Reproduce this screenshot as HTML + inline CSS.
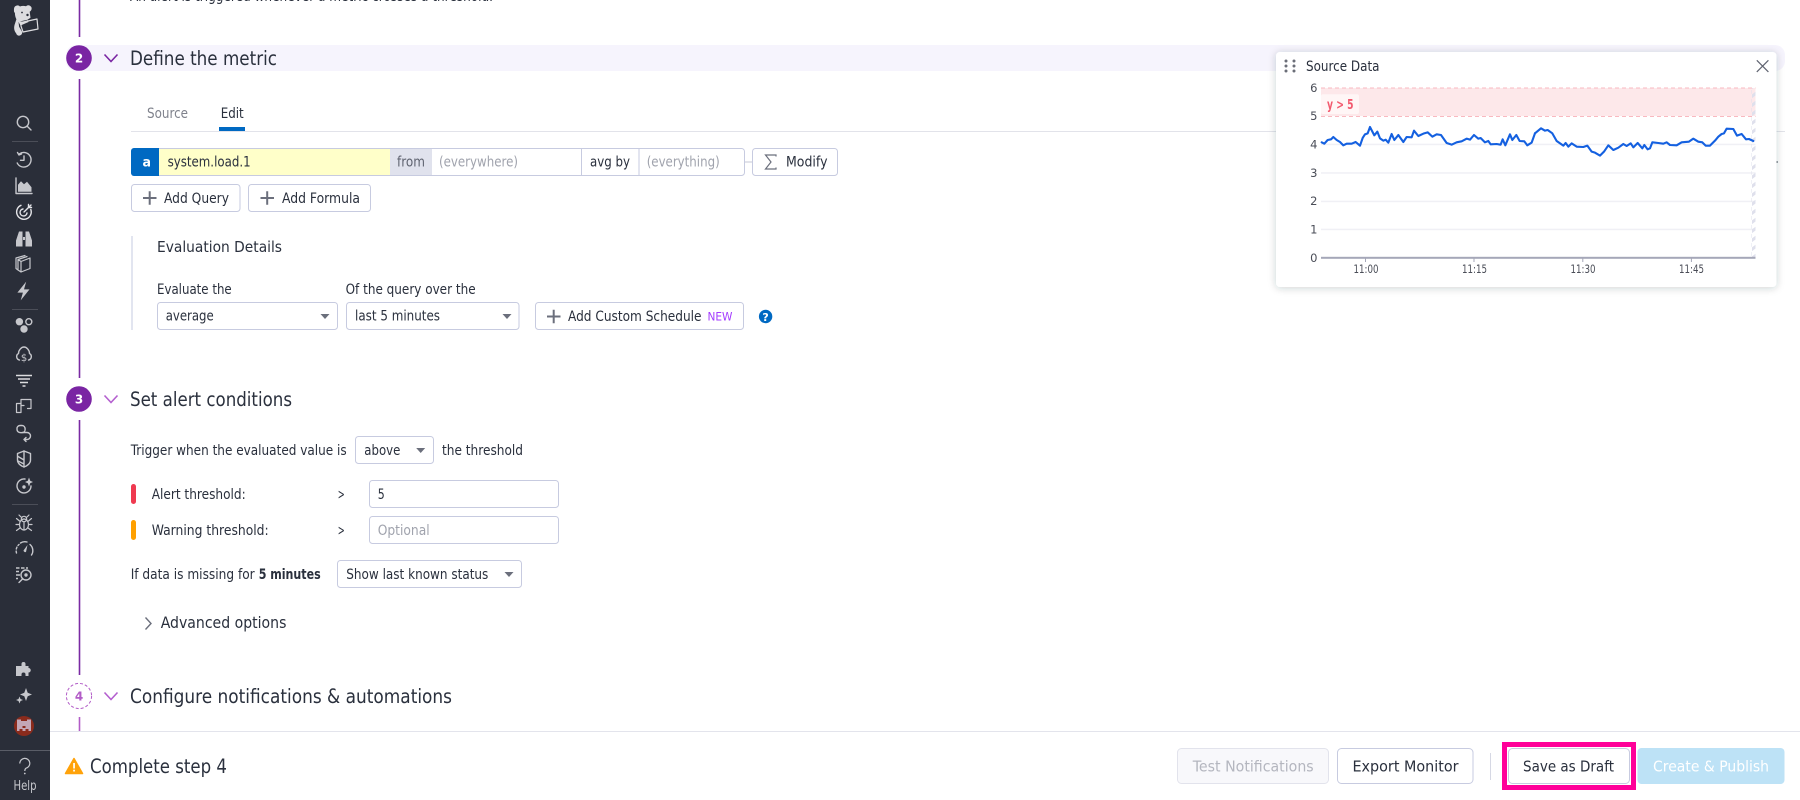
<!DOCTYPE html>
<html><head><meta charset="utf-8"><title>Define the metric</title>
<style>
html,body{margin:0;padding:0;background:#fff;width:1800px;height:800px;overflow:hidden}
svg{display:block}
text{font-family:"DejaVu Sans","Liberation Sans",sans-serif;fill:#2a303d;font-size:14px}
.t{font-size:19.5px}.m{font-size:15px}.g{fill:#a0a3ad}.s{font-size:11.5px;fill:#4a4d57}
.ic{fill:none;stroke:#c6c7cc;stroke-width:1.4;stroke-linecap:round;stroke-linejoin:round}
.if{fill:#c6c7cc;stroke:none}
.b{fill:#fff;stroke:#c7cbe0;stroke-width:1}
.p{stroke:#6b6f7c;stroke-width:2;fill:none}
.a{fill:#6b6f7c}
</style></head><body>
<svg width="1800" height="800" viewBox="0 0 1800 800" xmlns="http://www.w3.org/2000/svg">
<defs>
<filter id="sh" x="-5%" y="-10%" width="110%" height="120%"><feDropShadow dx="0" dy="1" stdDeviation="4" flood-color="#2a2d39" flood-opacity=".22"/></filter>
<pattern id="ht" width="6" height="9" patternUnits="userSpaceOnUse"><path d="M-1 7L7 1" stroke="#dfe0ec" stroke-width="3"/></pattern>
</defs>
<rect width="1800" height="800" fill="#fff"/>

<!-- step rail -->
<rect x="66" y="45" width="1719" height="26" rx="10" fill="#f6f4fd"/>
<rect x="78.700" y="0" width="1.600" height="37" fill="#7a2aa3"/>
<rect x="78.700" y="79" width="1.600" height="299" fill="#7a2aa3"/>
<rect x="78.700" y="420" width="1.600" height="255" fill="#7a2aa3"/>
<rect x="78.700" y="717" width="1.600" height="14" fill="#b25cc7"/>
<text x="130" y="1" class="m" textLength="363" lengthAdjust="spacingAndGlyphs">An alert is triggered whenever a metric crosses a threshold.</text>

<circle cx="79" cy="58" r="12.800" fill="#7a25a3"/>
<text x="79" y="62.500" text-anchor="middle" style="font-size:12px;font-weight:bold;fill:#fff">2</text>
<path d="M104.500 54.500L111 61.500L117.500 54.500" fill="none" stroke="#7a25a3" stroke-width="1.600"/>
<text x="130" y="65.200" class="t" textLength="147" lengthAdjust="spacingAndGlyphs">Define the metric</text>

<!-- tabs -->
<rect x="131" y="131" width="1654" height="1" fill="#e2e3ea"/>
<text x="147" y="118" class="g" style="fill:#7f828c" textLength="41" lengthAdjust="spacingAndGlyphs">Source</text>
<text x="220.700" y="118" textLength="23" lengthAdjust="spacingAndGlyphs">Edit</text>
<rect x="219" y="127" width="26" height="4" fill="#0069c2"/>
<circle cx="1777" cy="162" r="1" fill="#7f828c"/>

<!-- query row -->
<rect x="131.500" y="148.500" width="613" height="27" rx="3" class="b"/>
<path d="M134 148h25v28h-25a3 3 0 0 1-3-3v-22a3 3 0 0 1 3-3z" fill="#0069c2"/>
<rect x="159" y="149" width="231" height="26" fill="#ffffc9"/>
<rect x="390" y="149" width="42" height="26" fill="#e0e2ed"/>
<rect x="581" y="149" width="1" height="26" fill="#c7cbe0"/>
<rect x="638.500" y="149" width="1" height="26" fill="#c7cbe0"/>
<rect x="745" y="161" width="7" height="2" fill="#e2e3ea"/>
<text x="142.500" y="166.500" style="fill:#fff;font-weight:bold;font-size:13px" textLength="8.500" lengthAdjust="spacingAndGlyphs">a</text>
<text x="167.600" y="166.500" textLength="83" lengthAdjust="spacingAndGlyphs">system.load.1</text>
<text x="397" y="166.500" style="fill:#5f6370" textLength="28" lengthAdjust="spacingAndGlyphs">from</text>
<text x="439" y="166.500" class="g" textLength="79" lengthAdjust="spacingAndGlyphs">(everywhere)</text>
<text x="590" y="166.500" textLength="40" lengthAdjust="spacingAndGlyphs">avg by</text>
<text x="646.700" y="166.500" class="g" textLength="73" lengthAdjust="spacingAndGlyphs">(everything)</text>
<rect x="752.500" y="148.500" width="85" height="27" rx="3" class="b"/>
<path d="M776 156.500V155H765.500L771 162L765.500 169H776V167.500" fill="none" stroke="#6b6f7c" stroke-width="1.200"/>
<text x="786" y="166.500" textLength="41.500" lengthAdjust="spacingAndGlyphs">Modify</text>

<rect x="131.500" y="184.500" width="108.500" height="27" rx="3" class="b"/>
<path class="p" d="M143 198h13.500M149.700 191.200v13.500"/>
<text x="164" y="203" textLength="65" lengthAdjust="spacingAndGlyphs">Add Query</text>
<rect x="248.500" y="184.500" width="122" height="27" rx="3" class="b"/>
<path class="p" d="M260.500 198h13.500M267.200 191.200v13.500"/>
<text x="282" y="203" textLength="78" lengthAdjust="spacingAndGlyphs">Add Formula</text>

<!-- evaluation -->
<rect x="131" y="236" width="2" height="94" fill="#e2e5f0"/>
<text x="157" y="252" class="m" textLength="125" lengthAdjust="spacingAndGlyphs">Evaluation Details</text>
<text x="157" y="294" textLength="74.700" lengthAdjust="spacingAndGlyphs">Evaluate the</text>
<text x="345.600" y="294" textLength="130" lengthAdjust="spacingAndGlyphs">Of the query over the</text>
<rect x="157.500" y="302.500" width="180" height="27" rx="3" class="b"/>
<text x="165.700" y="320.500" textLength="48" lengthAdjust="spacingAndGlyphs">average</text>
<path class="a" d="M320.500 314h9l-4.500 5z"/>
<rect x="346.500" y="302.500" width="172.500" height="27" rx="3" class="b"/>
<text x="355" y="320.500" textLength="85" lengthAdjust="spacingAndGlyphs">last 5 minutes</text>
<path class="a" d="M502.500 314h9l-4.500 5z"/>
<rect x="535.500" y="302.500" width="208" height="27" rx="3" class="b"/>
<path class="p" d="M547 316.500h13.500M553.700 309.700v13.500"/>
<text x="568" y="321" textLength="133.500" lengthAdjust="spacingAndGlyphs">Add Custom Schedule</text>
<text x="707.500" y="320.500" style="font-size:11.500px;font-weight:500;fill:#a33bff" textLength="25" lengthAdjust="spacingAndGlyphs">NEW</text>
<circle cx="765.600" cy="316.500" r="6.700" fill="#0069c2"/>
<text x="765.600" y="320.800" text-anchor="middle" style="font-size:11px;font-weight:bold;fill:#fff">?</text>

<!-- step 3 -->
<circle cx="79" cy="399" r="12.800" fill="#7a25a3"/>
<text x="79" y="403.500" text-anchor="middle" style="font-size:12px;font-weight:bold;fill:#fff">3</text>
<path d="M104.500 395.500L111 402.500L117.500 395.500" fill="none" stroke="#b45fcf" stroke-width="1.600"/>
<text x="130" y="406" class="t" textLength="162" lengthAdjust="spacingAndGlyphs">Set alert conditions</text>

<text x="130.700" y="455" textLength="216" lengthAdjust="spacingAndGlyphs">Trigger when the evaluated value is</text>
<rect x="355.500" y="436.500" width="78" height="27" rx="3" class="b"/>
<text x="364.300" y="455" textLength="36" lengthAdjust="spacingAndGlyphs">above</text>
<path class="a" d="M416.200 448h9l-4.500 5z"/>
<text x="442" y="455" textLength="81" lengthAdjust="spacingAndGlyphs">the threshold</text>

<rect x="131" y="484" width="5" height="20" rx="2.500" fill="#ef3a50"/>
<text x="151.700" y="499" textLength="94" lengthAdjust="spacingAndGlyphs">Alert threshold:</text>
<text x="337.700" y="499" textLength="7" lengthAdjust="spacingAndGlyphs">&gt;</text>
<rect x="369.500" y="480.500" width="189" height="27" rx="3" class="b"/>
<text x="377.700" y="499" textLength="7" lengthAdjust="spacingAndGlyphs">5</text>

<rect x="131" y="520" width="5" height="20" rx="2.500" fill="#ffa000"/>
<text x="151.700" y="535" textLength="117" lengthAdjust="spacingAndGlyphs">Warning threshold:</text>
<text x="337.700" y="535" textLength="7" lengthAdjust="spacingAndGlyphs">&gt;</text>
<rect x="369.500" y="516.500" width="189" height="27" rx="3" class="b"/>
<text x="377.700" y="535" class="g" textLength="52" lengthAdjust="spacingAndGlyphs">Optional</text>

<text x="130.700" y="579" textLength="124" lengthAdjust="spacingAndGlyphs">If data is missing for</text>
<text x="258.700" y="579" style="font-weight:bold" textLength="62" lengthAdjust="spacingAndGlyphs">5 minutes</text>
<rect x="337.500" y="560.500" width="184" height="27" rx="3" class="b"/>
<text x="346.300" y="579" textLength="142" lengthAdjust="spacingAndGlyphs">Show last known status</text>
<path class="a" d="M504.500 572h9l-4.500 5z"/>

<path d="M145.500 617.500L151 623.500L145.500 629.500" fill="none" stroke="#6b6f7c" stroke-width="1.400"/>
<text x="160.700" y="628" style="font-size:16px" textLength="125.700" lengthAdjust="spacingAndGlyphs">Advanced options</text>

<!-- step 4 -->
<circle cx="79" cy="696" r="12.600" fill="#fff" stroke="#b25cc7" stroke-width="1" stroke-dasharray="3 2"/>
<text x="79" y="700.500" text-anchor="middle" style="font-size:12px;font-weight:bold;fill:#b25cc7">4</text>
<path d="M104.500 692.500L111 699.500L117.500 692.500" fill="none" stroke="#b45fcf" stroke-width="1.600"/>
<text x="130" y="703" class="t" textLength="322" lengthAdjust="spacingAndGlyphs">Configure notifications &amp; automations</text>

<!-- footer -->
<rect x="50" y="731" width="1750" height="69" fill="#fff"/>
<rect x="50" y="731" width="1750" height="1" fill="#e3e4ec"/>
<path d="M74 758.500L82.500 773.500H65.500z" fill="#ffa20a" stroke="#ffa20a" stroke-width="1.500" stroke-linejoin="round"/>
<rect x="73.200" y="763" width="1.700" height="5.500" fill="#fff"/><rect x="73.200" y="769.700" width="1.700" height="1.800" fill="#fff"/>
<text x="90" y="773" class="t" textLength="137" lengthAdjust="spacingAndGlyphs">Complete step 4</text>

<rect x="1177.500" y="748.500" width="151" height="35" rx="4" fill="#f8f8fb" stroke="#e2e3ec"/>
<text x="1192.700" y="771.500" class="m" style="fill:#b4b6bf" textLength="121" lengthAdjust="spacingAndGlyphs">Test Notifications</text>
<rect x="1337.500" y="748.500" width="135.500" height="35" rx="4" class="b"/>
<text x="1352.500" y="771.500" class="m" textLength="106" lengthAdjust="spacingAndGlyphs">Export Monitor</text>
<rect x="1490" y="753" width="1" height="27" fill="#d6d8e4"/>
<rect x="1504.500" y="744.500" width="129" height="43" fill="none" stroke="#ff0099" stroke-width="5"/>
<rect x="1508.500" y="748.500" width="121" height="35" rx="4" class="b"/>
<text x="1523" y="771.500" class="m" textLength="91" lengthAdjust="spacingAndGlyphs">Save as Draft</text>
<rect x="1637.500" y="748" width="147" height="36" rx="4" fill="#bde2f6"/>
<text x="1653" y="771.500" class="m" style="fill:#fff;font-weight:500" textLength="116" lengthAdjust="spacingAndGlyphs">Create &amp; Publish</text>

<!-- chart card -->
<rect x="1276" y="52" width="500.500" height="235" rx="4" fill="#fff" filter="url(#sh)"/>
<g fill="#6b6e78"><circle cx="1286" cy="61" r="1.500"/><circle cx="1294" cy="61" r="1.500"/><circle cx="1286" cy="66" r="1.500"/><circle cx="1294" cy="66" r="1.500"/><circle cx="1286" cy="71" r="1.500"/><circle cx="1294" cy="71" r="1.500"/></g>
<text x="1306" y="71" textLength="73.500" lengthAdjust="spacingAndGlyphs">Source Data</text>
<path d="M1756.800 60.300L1768.400 71.900M1768.400 60.300L1756.800 71.900" stroke="#5f6370" stroke-width="1.200" fill="none"/>

<rect x="1321" y="88" width="434.500" height="28" fill="#fde8ea"/>
<path d="M1321 88h434.500M1321 116.500h434.500" stroke="#f9b9c0" stroke-width="1" stroke-dasharray="4 3" fill="none"/>
<rect x="1321" y="94.300" width="38" height="19.700" rx="2" fill="#fff6f6"/>
<text x="1327" y="109" style="font-size:13px;fill:#f2596e;font-weight:bold" textLength="26.500" lengthAdjust="spacingAndGlyphs">y &gt; 5</text>
<g fill="#f0f0f5"><rect x="1321" y="143.700" width="434.500" height="1.500"/><rect x="1321" y="172.200" width="434.500" height="1.500"/><rect x="1321" y="200.700" width="434.500" height="1.500"/><rect x="1321" y="228.700" width="434.500" height="1.500"/></g>
<rect x="1751.500" y="88" width="4" height="170" fill="url(#ht)"/>
<rect x="1321" y="256.800" width="434.500" height="2" fill="#a5a7b8"/>
<path d="M1365.500 258v4M1474 258v4M1582.800 258v4M1691.400 258v4" stroke="#a5a7b8" stroke-width="1" fill="none"/>
<g text-anchor="end">
<text x="1317.500" y="92" class="s">6</text><text x="1317.500" y="120" class="s">5</text><text x="1317.500" y="148.500" class="s">4</text><text x="1317.500" y="177" class="s">3</text><text x="1317.500" y="205" class="s">2</text><text x="1317.500" y="233.500" class="s">1</text><text x="1317.500" y="262" class="s">0</text>
</g>
<g>
<text x="1353.500" y="273" class="s" textLength="25" lengthAdjust="spacingAndGlyphs">11:00</text><text x="1462" y="273" class="s" textLength="25" lengthAdjust="spacingAndGlyphs">11:15</text><text x="1570.500" y="273" class="s" textLength="25" lengthAdjust="spacingAndGlyphs">11:30</text><text x="1679" y="273" class="s" textLength="25" lengthAdjust="spacingAndGlyphs">11:45</text>
</g>
<g fill="none" stroke="#1460e0" stroke-width="6.300" stroke-linejoin="round" stroke-linecap="round">
<polyline transform="translate(1315,110) scale(.3333)" points="20,97 28,101 38,90 48,88 55,81 65,90 75,96 85,106 95,101 110,101 122,96 135,107 143,84 150,73 158,70 165,51 178,76 187,65 195,85 205,92 212,89 220,98 230,72 238,90 250,75 265,96 275,81 290,82 297,62 310,78 325,71 338,67 352,80 365,73 378,75 395,99 410,104 425,97 440,94 455,86 465,89 477,75 490,86 497,84 510,97 520,93 527,103 545,102 557,104 563,88 571,106 585,73 592,90 604,75 614,93 628,94 637,106 650,98 660,70"/>
<polyline transform="translate(1535,110) scale(.3333)" points="0,70 18,55 30,62 38,60 52,70 65,93 85,107 92,99 100,110 110,100 125,110 145,111 157,107 170,125 180,128 195,137 207,125 220,106 235,120 250,113 265,102 275,108 287,100 295,112 308,99 322,115 328,105 338,118 345,115 352,97 370,99 385,101 395,97 405,105 425,106 440,97 462,95 475,86 490,95 502,97 512,107 525,107 540,92 550,80 560,72 567,70 575,56 595,57 606,77 620,72 633,88 642,87 655,93"/>
</g>

<!-- sidebar -->
<rect x="0" y="0" width="50" height="800" fill="#2a2e39"/>
<!-- logo -->
<g>
<path d="M14 9a3.500 3.500 0 0 1 6-2.500c2-.8 4-.8 6-.2a3.300 3.300 0 0 1 5.500 3.200c-.6 1.400-1.200 1.800-1.800 2.300l.8 6-3 2-9 2 .6 5 3 5a3 3 0 0 1-6 1.500c-1.800-2.300-2.500-5-1.500-8.500l1.800-5.500c-1-2-1.500-4-1.500-6.500-1-.4-1-2.300-.9-3.800z" fill="#dcdcdf"/>
<path d="M21 22.500L37 19L38 29L23 32L21 26z" fill="#2a2e39" stroke="#dcdcdf" stroke-width="1.200" stroke-linejoin="round"/>
<path d="M18 21l6 1 4-2 .5 2-8 3.500z" fill="#dcdcdf"/>
<circle cx="27.500" cy="15" r="1.200" fill="#2a2e39"/><circle cx="22" cy="12.500" r=".9" fill="#2a2e39"/>
</g>
<g transform="translate(24,123)" class="ic"><circle cx="-1" cy="-1" r="5.700"/><path d="M3.200 3.200L7 7"/></g>
<rect x="12" y="141" width="26" height="1" fill="#4b4e58"/>
<g transform="translate(24,160)" class="ic"><path d="M-4.600-6.100A7.300 7.300 0 1 1-6.800 3"/><path d="M-6.500-7.500l1.500 2.500 2.500-1M0-4v4.300h-3.500"/></g>
<g transform="translate(24,186)"><path class="ic" d="M-8-8V7.500H8"/><path class="if" d="M-6 5.700v-7l3-3.500 3 3 3-2.500 4.500 5.500v4.500z"/></g>
<g transform="translate(24,212)" class="ic" style="stroke:#e4e4e8"><path d="M-3-6.700A7.300 7.300 0 1 0 6.800-2.500"/><path d="M-1-3A3.500 3.500 0 1 0 3 1"/><path d="M0 0L7-7M4.500-7.500v3h3"/></g>
<g transform="translate(24,239)" class="if"><path d="M-8 7.500v-6l3-9h3.500V7.500zM8 7.500v-6L5-7.500H1.500V7.500zM-1-2h2v3h-2z"/></g>
<g transform="translate(24,265)" class="ic" style="stroke-width:1.200"><path d="M-3 7V-3.500L6-7V3.500zM-3-3.500L-6-5.500M-3 7L-6 5V-5.500L3-8.500M-6 5L-8 3.500V-7L1-9.500"/></g>
<path transform="translate(24,291) scale(1.100)" class="if" d="M2-8.500L-6 1.500H-1L-3 8.500L5-1.500H0z"/>
<rect x="12" y="309" width="26" height="1" fill="#4b4e58"/>
<g transform="translate(24,325)"><circle class="if" cx="-4.600" cy="-3.300" r="3.700"/><circle class="if" cx="0" cy="4" r="3.700"/><circle class="ic" cx="4.800" cy="-3.300" r="3"/></g>
<g transform="translate(24,354)"><path class="ic" d="M-5 6H-4.500A3.500 3.500 0 0 1-5.500-.5C-5.500-4-2.500-7 0-7S5.500-4 5.500-.5A3.500 3.500 0 0 1 4.500 6H5"/><text x="0" y="7" text-anchor="middle" style="font-size:10px;fill:#c6c7cc">$</text></g>
<path transform="translate(24,381)" d="M-8-5.500H8M-6-2H6M-4 1.500H4M-1.500 5h3" stroke="#dcdcdf" stroke-width="1.500" fill="none"/>
<g transform="translate(24,406)" class="ic" style="stroke-width:1.200"><path d="M-3-2.500V-6.500H7V2.500H3.500"/><rect x="-7.500" y="-2.500" width="4.500" height="9"/><path d="M-3-.5H0"/></g>
<g transform="translate(24,433)" class="ic"><path d="M-4-7.500H-2C2-7.500 2-1 -1-.5S-7-.5 -7-4M-4-7.500A3 3 0 0 0-7-4"/><path d="M-1-.5H3A3.500 3.500 0 0 1 3 6.500H0M0 6.500L2 4.500M0 6.500L2 8.500"/></g>
<g transform="translate(24,459)" class="ic"><path d="M0-8L6.500-5.500V1C6.500 4.500 3 7 0 8C-3 7-6.500 4.500-6.500 1V-5.500z"/><path d="M0-8V8M-6-2.500L0 1M-6 2L0 5"/></g>
<g transform="translate(24,486)"><path class="ic" d="M1-7A7 7 0 1 0 7 0"/><circle class="if" cx="0" cy="1" r="1.700"/><path class="if" d="M5-8.500L6.200-5.200 9-4 6.200-2.800 5 .5 3.800-2.800 1-4 3.800-5.200z"/></g>
<rect x="12" y="504" width="26" height="1" fill="#4b4e58"/>
<g transform="translate(24,523)" class="ic" style="stroke-width:1.200"><ellipse cx="0" cy="1.500" rx="4.500" ry="5.500"/><circle cx="0" cy="-4" r="2.700"/><path d="M-3-6L-5-8M3-6L5-8M-4.500-2L-7.500-4.500M4.500-2L7.500-4.500M-4.500 1.500H-8M4.500 1.500H8M-4 5L-7.500 7.500M4 5L7.500 7.500M0-1V7"/></g>
<g transform="translate(24,549)"><path class="ic" d="M-7.500 4A8 8 0 0 1-5-4.500" stroke-dasharray="2 2"/><path class="ic" d="M-3.500-6A8 8 0 0 1 3-7M6-4.500A8 8 0 0 1 7.500 6"/><path class="if" d="M3.500-4L-.5 1.500A1.800 1.800 0 0 0 2 3z"/></g>
<g transform="translate(24,575)"><path d="M-8-7h3.500M-3-7h3.500M2-7h2M-8-3.500h3M-8 0h4M-8 3.500h2" stroke="#c6c7cc" stroke-width="1.500" fill="none"/><circle class="ic" cx="2" cy="0" r="5"/><circle class="if" cx="2" cy="0" r="1.700"/><path class="ic" d="M-1.500 4L-5 7.500"/></g>
<path transform="translate(24,670)" class="if" d="M-8-4H-2.500V-6A2 2 0 1 1 1.500-6V-4H4.500V-2A2 2 0 1 1 4.500 2.500V6H1.500V4.500A2 2 0 0 0-2.500 4.500V6H-8z"/>
<g transform="translate(24,695)" class="if"><path d="M2-7L3.700-2.200 8-.5 3.700 1.200 2 6 .3 1.200-4-.5.300-2.200z"/><path d="M-4.500 1.500L-3.500 4-1 5-3.500 6-4.500 8.500-5.500 6-8 5-5.500 4z"/></g>
<circle cx="24" cy="726" r="10" fill="#8a2b1c"/>
<path d="M17 719.500h14v11.500h-14z" fill="#c3a7b6"/>
<path d="M21 717h6v4h-6zM22.500 726h3v2h-3zM19.500 729h3v3h-3zM25.500 729h3v3h-3z" fill="#8a2b1c"/>
<rect x="0" y="750" width="50" height="1" fill="#5a5d67"/>
<path d="M19.800 763.500A5 5 0 1 1 26 768.200C24.900 768.900 24.800 769.500 24.800 771" fill="none" stroke="#c6c7cc" stroke-width="1.200"/>
<circle cx="24.800" cy="773.500" r=".9" fill="#c6c7cc"/>
<text x="13.500" y="790" style="font-size:13px;fill:#c6c7cc" textLength="23" lengthAdjust="spacingAndGlyphs">Help</text>
</svg>
</body></html>
